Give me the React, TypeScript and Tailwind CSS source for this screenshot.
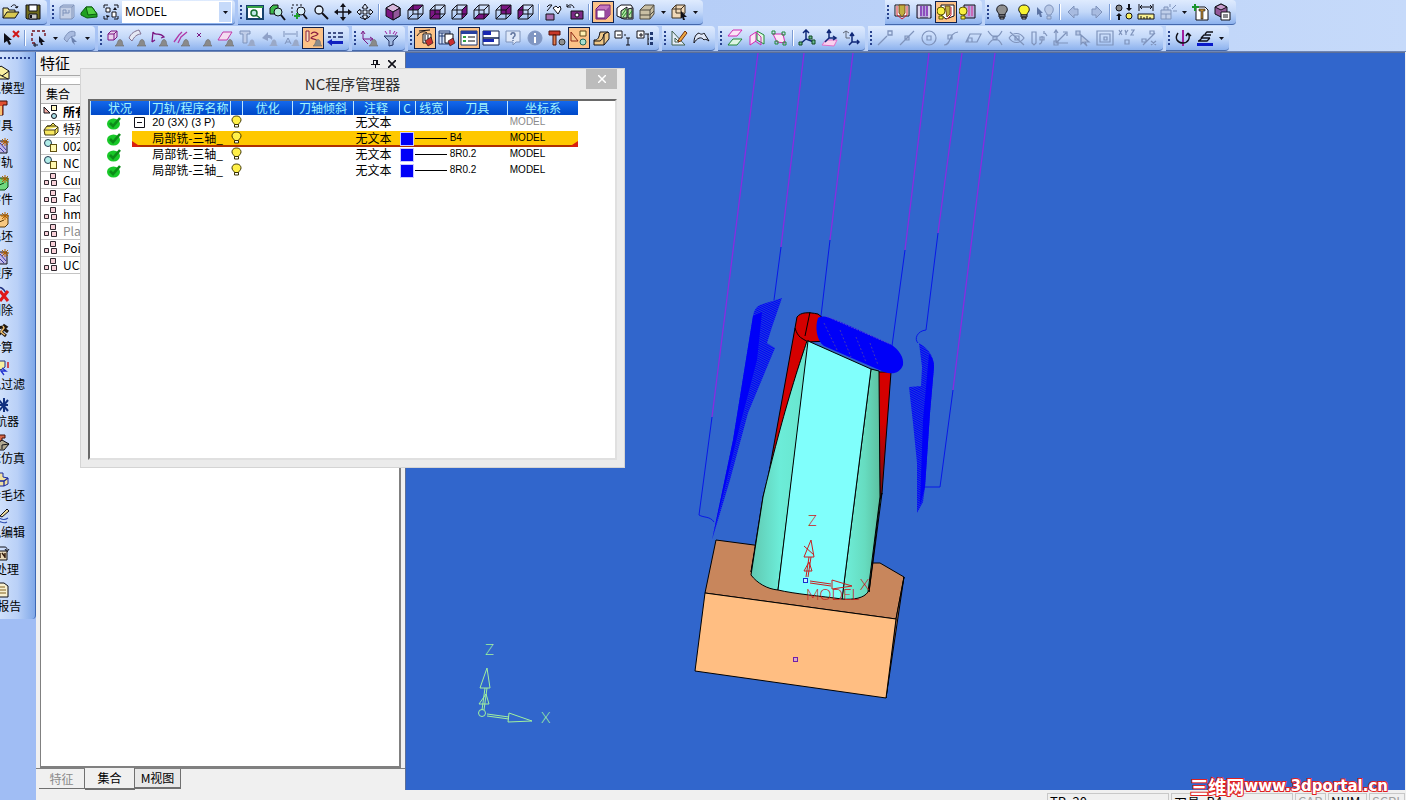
import { Fragment, useState } from "react";
import clsx from "clsx";

// [path, fill, stroke, stroke width]
type Shape = [string, string, string?, number?];

const K = "#101018";
const G = "#7f93bb";
const V = "#7a1582";
const N = "none";

const WIRE = "M2 7H12V16H2ZM2 7L7 2H17L12 7M17 2V11L12 16M7 2V11H17M7 11L2 16";
const BELL: Shape[] = [["M9 17C11 16 11 14 12 12C13 10 15 10 16 12C17 14 16 16 18 17Z", "#8a8a8a", "#6b6b6b", 0.6]];
const GRAYBELL: Shape[] = [["M9 17C11 16 11 14 12 12C13 10 15 10 16 12C17 14 16 16 18 17Z", "#9aa9c8"]];
const bulb = (fill: string, stroke: string, s = 1): Shape[] => [
  ["M9 2C5 2 3 5 4 8C5 10 6 10 6 12H12C12 10 13 10 14 8C15 5 13 2 9 2Z", fill, stroke, s],
  ["M6 12H12V14H6ZM7 14H11V16H7Z", stroke === K ? "#c8c8c8" : "#b8c8e8", stroke, s],
];
const cube = (face: string): Shape[] => [
  [face, V],
  [WIRE, N, K],
];

const icons: Record<string, Shape[]> = {
  open: [
    ["M1 15V5H6L7 7H13V9", "#f0e48c", K],
    ["M1 15L5 9H17L13 15Z", "#d8c850", K],
    ["M9 4C11 1 14 1 15 5M13 4L15 5L16 3", N, K],
  ],
  save: [
    ["M2 2H16V16H3L2 15Z", "#6f6a1c", K],
    ["M5 2H13V8H5Z", "#fff", K],
    ["M5 11H13V16H5Z", "#c8c8c8", K],
    ["M6 12H8V15H6Z", K],
  ],
  part: [
    ["M2 4L5 2H16V14L14 16H2Z", "#c3cfe6", G],
    ["M2 4H14V16M14 4L16 2M5 13V7H8V10H11V7M5 10H8", N, G],
  ],
  stock: [
    ["M1 10L6 4H12L17 11V14L7 15L1 12Z", "#20a020", "#0c5c10"],
    ["M6 4H12L17 11L8 12Z", "#50d040", "#0c5c10"],
  ],
  layers: [
    ["M2 5V2H6M12 2H16V5M16 13V16H12M6 16H2V13", N, K],
    ["M4 5H8V9H4ZM10 9H14V14H10Z", "#fff", K],
    ["M13 4L15 7L11 7ZM4 12L8 13L5 15Z", K],
  ],
  zoomWindow: [
    ["M1 3H17V16H1Z", "#fff", "#17406c", 2],
    ["M1 3H17V5H1Z", "#35a045"],
    ["M11 10A3 3 0 1 1 5 10A3 3 0 1 1 11 10M10 12L14 15", "#c0e8e8", "#187030", 1.5],
  ],
  zoomPart: [
    ["M2 5L5 2H10V8L7 11H2Z", "#3cb84a", K],
    ["M14 9A4 4 0 1 1 6 9A4 4 0 1 1 14 9", "#b8ecd8", K],
    ["M13 12L17 17", N, K, 2],
  ],
  zoomIn: [
    ["M2 2H4M6 2H8M10 2H12M2 4V6M2 8V10M2 12H3", N, K],
    ["M15 8A4 4 0 1 1 7 8A4 4 0 1 1 15 8", "#d8ecfa", K],
    ["M13 11L17 16", N, K, 2],
    ["M7 10V16M4 13H10", N, "#20a030", 2],
  ],
  zoom: [
    ["M11 7A4 4 0 1 1 3 7A4 4 0 1 1 11 7", "#e4f0fc", K, 1.3],
    ["M10 10L16 16", N, K, 2],
  ],
  pan: [
    ["M9 2V16M2 9H16", N, K, 1.4],
    ["M9 0L12 4H6ZM9 18L6 14H12ZM0 9L4 6V12ZM18 9L14 12V6Z", K],
  ],
  rotate: [
    ["M9 1L12 5H10V8H14V6L17 9L14 12V10H10V13H12L9 17L6 13H8V10H4V12L1 9L4 6V8H8V5H6Z", "#dce8fa", K],
    ["M4 14C7 17 12 16 14 13", N, K],
  ],
  iso: [
    ["M9 1L16 5V13L9 17L2 13V5Z", V, K],
    ["M9 1L16 5L9 9L2 5Z", "#d8b8dc", K],
    ["M9 9L16 5V13L9 17Z", "#93589a", K],
  ],
  top: cube("M2 7L7 2H17L12 7Z"),
  front: cube("M2 7H12V16H2Z"),
  right: cube("M12 7L17 2V11L12 16Z"),
  bottom: cube("M2 16L7 11H17L12 16Z"),
  back: cube("M7 2H17V11H7Z"),
  left: cube("M2 7L7 2V11L2 16Z"),
  prevView: [
    ["M2 11H10V17H2Z", "#a870b0", K],
    ["M3 8L8 2M3 4L5 2H8", N, K],
    ["M9 5L12 3L14 5L16 3L17 6L14 11Z", "#fff", K],
  ],
  camera: [
    ["M5 8H17V16H5Z", "#7c2a86", K],
    ["M13 12A2 2 0 1 1 9 12A2 2 0 1 1 13 12", "#fff", K],
    ["M1 4C3 1 7 1 8 5M1 4L1 1M1 4L5 4", N, K],
  ],
  shaded: [
    ["M2 6L6 2H16V12L12 16H2Z", "#c878c0", "#6a1870"],
    ["M3 7H11V15H3Z", "#fff", "#6a1870"],
    ["M12 7L16 3V12L12 16Z", "#9a4aa0"],
  ],
  section: [
    ["M1 5L5 2H15L17 5V16H8L1 13Z", "#fff", K],
    ["M5 8L11 4V15H5ZM12 6L16 5V15H12Z", "#b4e4a4", K],
    ["M6 12L10 6M7 14L11 9M13 12L16 8", N, "#208828"],
  ],
  transparent: [
    ["M2 7L7 2H16V11L12 16H2Z", "#c9bfa4", "#4e4a40"],
    ["M2 7H12V16M12 7L16 2M2 12H12L16 8", N, "#4e4a40"],
  ],
  pickCube: [
    ["M2 6L6 2H15V10L11 15H2Z", "#f0d8b8", "#3c3020"],
    ["M2 6H11V15M11 6L15 2M6 2V10M6 10H14", N, "#3c3020"],
    ["M11 8L17 14H14L15 17L13 17L12 14L11 16Z", K],
  ],
  toolA: [
    ["M2 2H16V13H2Z", "#fff", K],
    ["M6 2H12V10L9 14L6 10Z", "#c0b040", "#784818"],
    ["M4 3V12L9 16L14 12V3", N, "#d02030"],
  ],
  toolB: [
    ["M2 2H16V15H2Z", "#b8a8dc", K],
    ["M6 3V13M9 3V13M12 3V13", N, "#7c2ab0", 1.4],
    ["M4 3V15M14 3V15", N, "#fff"],
  ],
  toolC: [
    ["M4 2H17V13L9 16L4 12Z", "#fff", K],
    ["M8 3H13V11L10 14Z", "#c0b040", "#784818"],
    ["M14 4V12L10 16", N, "#d02030"],
    ["M8 8A4 4 0 1 1 0 8A4 4 0 1 1 8 8M2 13H6V16H2Z", "#f8ee40", "#605800"],
  ],
  toolD: [
    ["M5 2H16V15H5Z", "#b8a8dc", K],
    ["M10 3V13M13 3V13", N, "#d050a8", 1.4],
    ["M8 8A4 4 0 1 1 0 8A4 4 0 1 1 8 8M2 13H6V16H2Z", "#f8ee40", "#605800"],
  ],
  bulbOff: bulb("#909090", K),
  bulbOn: bulb("#f8f430", K),
  bulbPick: [
    ["M12 2C9 2 7 5 8 8C9 10 10 10 10 12H14C14 10 16 10 16 8C17 5 15 2 12 2ZM10 13H14V16H10Z", "#b8c8e6", G],
    ["M0 4L6 10H4L5 14L3 14L2 11L0 12Z", "#5d74a4"],
  ],
  prev: [["M3 9L9 3V6H13V12H9V15Z", "#a8bbe0", G]],
  next: [["M15 9L9 3V6H5V12H9V15Z", "#a8bbe0", G]],
  swap: [
    ["M7 5A3 3 0 1 1 1 5A3 3 0 1 1 7 5", "#888", K],
    ["M17 13A3 3 0 1 1 11 13A3 3 0 1 1 17 13", "#f8f060", K],
    ["M14 1V5M4 17V13", N, K, 2],
    ["M14 8L11 5H17ZM4 10L1 13H7Z", K],
  ],
  measure: [
    ["M2 1V8M16 1V8M3 4H15M5 2L3 4L5 6M13 2L15 4L13 6", N, K],
    ["M1 11H17V16H1Z", "#f8f090", K],
    ["M4 13V16M7 14V16M10 13V16M13 14V16", N, K],
  ],
  explode: [
    ["M2 7H12V16H2ZM2 11H12M5 7V4H9V7M7 11V16", "#c0cfea", G],
    ["M13 6L17 2M14 8H18M11 4V1", N, G],
  ],
  addTool: [
    ["M5 4H14L17 7V17H5Z", "#fff", K],
    ["M8 6H14V8H12V16H10V8H8Z", "#c08a30", K, 0.6],
    ["M4 1V8M1 4H8", N, "#18942c", 2],
  ],
  cubeProps: [
    ["M8 1L14 4V11L8 14L2 11V4Z", "#93589a", K],
    ["M8 1L14 4L8 7L2 4Z", "#c89ccc", K],
    ["M8 9H17V17H8Z", "#fff", K],
    ["M10 12H15M10 14H15", N, K],
  ],
  deselect: [
    ["M2 4L10 11H7L9 15L7 16L5 12L2 14Z", K],
    ["M11 2L17 8M17 2L11 8", N, "#d01818", 2],
  ],
  select: [
    ["M2 2H5M7 2H10M12 2H15M2 4V7M2 9V12M15 4V7M2 14H5", N, "#701018", 1.4],
    ["M9 7L15 13H12L13 16L11 16L10 13L9 14Z", K],
    ["M5 14V18M3 16H8", N, K],
  ],
  pickGray: [["M2 10C5 3 9 1 13 3V7C9 7 7 9 5 13Z", "#a8bbe0", G], ["M9 7L15 13H12L13 16L10 13Z", "#6b81ae"]],
  fCube: [["M2 5L5 2H11V8L8 11H2ZM2 5H8V11M8 5L11 2", "#e8d0ec", V], ...BELL],
  fFace: [["M1 9C3 4 7 2 11 1L13 5C9 5 6 8 4 12Z", "#e4e8f4", "#807090"], ...BELL],
  fCurve: [["M2 13L3 3C5 8 9 2 14 8L11 9M2 13L5 11", N, V, 1.3], ...BELL],
  fEdge: [["M2 13L7 6L10 3M6 14L9 8L15 3", N, "#b038a8", 1.3], ...BELL],
  fPoint: [["M3 4L7 8M7 4L3 8", N, V], ...BELL],
  fPlane: [["M2 11L7 3H16L11 11Z", "#f4dcf0", "#c038a8"], ...BELL],
  fTool: [["M2 2H12V5H9V14H5V5H2Z", "#c0cde8", G], ...GRAYBELL],
  fSweep: [["M2 9L8 3V6C12 6 13 8 12 11C10 9 9 9 8 9V12Z", "#8fa1c8"], ...GRAYBELL],
  fDim: [["M2 2V8M15 2V8M3 5H14M3 15L6 9L9 15M4 13H8", N, G], ...GRAYBELL],
  fPath: [
    ["M2 2V11C2 13 5 13 5 11V2Z", "#f8e0c0", "#8c2040"],
    ["M7 5C9 2 12 3 14 5C12 8 9 6 7 9C9 11 12 9 13 12", N, "#8c2040", 1.2],
    ...BELL,
  ],
  fList: [
    ["M2 4H5M7 4H10M12 4H17M2 8H5M7 8H10M12 8H17", N, "#102060", 1.6],
    ["M1 13L6 10V12H17V15H6V17Z", "#1020c0"],
  ],
  fAxis: [["M3 3V10M3 10H12M3 10L8 15M1 5L3 2L5 5M10 8L13 10L10 12", N, V], ...BELL],
  funnel: [
    ["M2 7H16L11 12V16L7 17V12Z", "#a0b8e0", "#203060"],
    ["M3 2L5 5M8 1V5M13 2L11 5M15 3L13 6", N, "#a020a0"],
  ],
  nav1: [["M1 7C4 2 8 2 11 4M3 2L14 1", N, K], ["M7 5H15V14H7Z", "#fff", K], ["M9 12L15 8L17 14L12 17Z", "#c83030", K, 0.6], ["M9 6V12M12 6V10", N, K]],
  nav2: [["M1 2H12V15H1Z", "#d8e4f8", "#203870"], ["M1 4H12M1 7H7M4 4V15", N, "#203870"], ["M7 5H15V14H7Z", "#fff", K], ["M10 12L15 9L17 14L12 17Z", "#c83030", K, 0.6]],
  listView: [["M1 2H17V16H1Z", "#fff", "#203870"], ["M1 2H17V5H1Z", "#2840a0"], ["M3 7H6V9H3ZM3 11H6V13H3Z", "#30a040"], ["M8 8H15M8 12H15", N, K]],
  panels: [["M1 2H17V9H1ZM1 9H17V16H1Z", "#fff", "#10204c"], ["M1 2H9V6H1ZM1 10H12V13H1Z", "#1828b0"]],
  help: [["M2 2H16V13H12L9 16V13H2Z", "#dfe8f8", G], ["M7 6C7 3 11 3 11 6C11 8 9 7 9 10M9 11V12", N, "#62769f", 1.5]],
  info: [["M16 9A7 7 0 1 1 2 9A7 7 0 1 1 16 9", "#8096c2", "#8096c2"], ["M9 8V14M9 4V6", N, "#fff", 2]],
  toolGear: [
    ["M1 2H12V6H1Z", "#c83828", "#501008"],
    ["M5 6H8V16H5Z", "#e08050", "#501008"],
    ["M17 13A3 3 0 1 1 11 13A3 3 0 1 1 17 13", "#909090", "#303030"],
  ],
  shapes: [["M1 3V12H8Z", "#f4c890", "#902818"], ["M10 2H16V7H10Z", "#fff0b0", "#604818"], ["M16 13A3 3 0 1 1 10 13A3 3 0 1 1 16 13", "#a8e0d0", "#206858"]],
  solid: [["M2 16V11C6 11 7 9 8 3H16L17 4V10L12 16Z", "#f0c888", K], ["M2 12H8C10 11 11 9 12 5L16 3M12 5V16", N, K]],
  collapse: [["M1 2H8V9H1Z", "#fff", K], ["M3 6H7M10 6H12M14 9V16M12 9H16M12 16H16", N, K]],
  expand: [["M1 2H8V9H1Z", "#fff", K], ["M3 6H7M5 4V8M9 5H12V16M12 5H13M12 10H13M12 15H13", N, K], ["M14 3H17V6H14ZM14 8H17V11H14ZM14 13H17V16H14Z", "#203870"]],
  sketch: [["M2 2V16H15Z", "#e4ecf8", "#406050"], ["M5 9V13H9Z", "#fff", "#406050"], ["M8 13L9 10L15 2L17 4L11 12Z", "#f0a840", "#703010"]],
  surface: [["M2 14C2 8 4 5 7 4C9 6 11 5 12 4L17 12C14 10 13 10 12 11C9 7 5 9 2 14Z", "#e0e8f8", K]],
  planes: [["M2 7L7 1H16L11 7Z", "#fbe4f6", "#d02ab0"], ["M2 16L7 10H16L11 16Z", "#e0f6e4", "#208838"]],
  planes2: [["M2 7L8 3V12L2 16Z", "#fbe4f6", "#d02ab0"], ["M9 2L16 6V15L9 11Z", "#e0f6e4", "#208838"], ["M8 3L13 8V16L7 12", N, "#d02ab0"]],
  planes3: [["M3 5L13 5L15 14L7 13Z", "#fbe4f6", "#d02ab0"], ["M2 2H5V5H2ZM12 3H15V6H12ZM13 13H16V16H13ZM5 12H8V15H5Z", N, "#208838"]],
  ucs: [["M8 1V10L2 15M8 10L16 13M5 4L8 1L11 4", N, "#102878", 1.5], ["M11 7H14V10H11ZM1 13H4V16H1ZM14 11H17V15H14Z", "#6ab890", "#104820"]],
  ucsPlane: [["M2 16L6 11H17L14 17Z", "#fbd0ee", "#e070c8"], ["M9 1V9H16M9 9L5 13M7 4L9 1L11 4M13 7L16 9L13 11", N, "#102878", 1.5]],
  ucsMove: [["M4 2V9M1 4L4 2L7 4M4 9H8", N, "#606878"], ["M10 4V13H17M8 7L10 4L12 7M15 11L17 13L15 15M10 13L7 16", N, "#102878", 1.5]],
  sEnd: [["M2 16L11 7M12 2H16V6H12Z", N, G, 1.3]],
  sMid: [["M2 16L16 2M7 7H11V11H7Z", "#b8c8e6", G, 1.2]],
  sCenter: [["M16 9A7 7 0 1 1 2 9A7 7 0 1 1 16 9M7 7H11V11H7Z", N, G, 1.2]],
  sTangent: [["M2 16C10 16 6 4 16 3M6 6H10V10H6Z", N, G, 1.2]],
  sPlane: [["M2 13L6 5H17L13 13ZM4 9H8V13H4Z", N, G, 1.2]],
  sCross: [["M2 2C7 10 12 10 16 2M2 16C7 8 12 8 16 16M7 7H11V11H7Z", N, G, 1.2]],
  sEye: [["M1 9C5 3 12 3 16 9C12 15 5 15 1 9M2 3L16 16M7 7H11V11H7Z", N, G, 1.2]],
  sCyl: [["M2 3H6V14L4 16L2 14ZM9 15C13 15 12 8 12 7M14 5V2M10 8H14V11H10ZM15 4L17 7", N, G, 1.2]],
  sAxes: [["M4 2V14H16M4 14L14 4M2 4L4 1L6 4M11 3H15V7M2 12H6V16H2Z", N, G, 1.2]],
  sPick: [["M2 2H6V6H2ZM7 6L15 13H11L13 17L9 13L7 15Z", "#b8c8e6", G, 1.2]],
  sFrame: [["M1 2H17V16H1ZM4 5H14V13H4ZM8 8H11V11H8Z", N, G, 1.2]],
  sXyz: [["M1 1L4 6M4 1L1 6M7 1L8 4L10 1M8 4V6M13 1H16L13 6H16M7 11H11V15H7Z", N, G, 1.2]],
  sPercent: [["M3 16L15 4M10 2H14V5H10ZM2 10H6V13H2ZM11 12L16 16M16 12L11 16", N, G, 1.2]],
  spin: [["M9 1V17", N, "#a020a0", 2], ["M4 4C0 10 4 14 9 14C14 14 17 9 14 4M14 4L12 7M14 4L17 7", N, K, 1.4]],
  layerStack: [["M1 14H17V17H1Z", "#0818c8"], ["M3 12L6 9H14M5 9L8 6H15M9 5L11 3H17M2 12H11L14 9", N, K, 1.3]],
};

const Icon = ({ shapes }: { shapes: Shape[] }) => (
  <svg width="18" height="18" viewBox="0 0 18 18" className="shrink-0" aria-hidden="true">
    {shapes.map(([d, fill, stroke, w], i) => (
      <path key={i} d={d} fill={fill} stroke={stroke ?? "none"} strokeWidth={w ?? 1} />
    ))}
  </svg>
);

// "|" is a separator, "v" a drop-down arrow, a leading "*" marks a pressed button
const ROW1 = {
  file: "open save",
  part: "part stock layers",
  view: "zoomWindow zoomPart zoomIn zoom pan rotate | iso top front right bottom back left | prevView camera | *shaded section transparent v pickCube v",
  tool: "toolA toolB *toolC toolD",
  show: "bulbOff bulbOn bulbPick | prev next | swap measure explode v addTool cubeProps",
};
const ROW2 = [
  "fCube fFace fCurve fEdge fPoint fPlane fTool fSweep fDim *fPath fList",
  "fAxis funnel",
  "*nav1 nav2 *listView panels help info toolGear *shapes solid collapse expand",
  "sketch surface",
  "planes planes2 planes3 | ucs ucsPlane ucsMove",
  "sEnd sMid sCenter sTangent sPlane sCross sEye sCyl sAxes sPick sFrame sXyz sPercent",
  "spin layerStack v",
];

const Tools = ({ spec }: { spec: string }) => (
  <>
    {spec.split(" ").map((t, i) => {
      if (t === "|")
        return (
          <span key={i} className="flex w-[6px] justify-center">
            <span className="h-4 w-px bg-[#7c9cd4]" />
            <span className="h-4 w-px bg-white" />
          </span>
        );
      if (t === "v")
        return (
          <button key={i} aria-label="More" className="flex w-[10px] justify-center">
            <svg width="5" height="3">
              <path d="M0 0H5L2.5 3Z" fill={K} />
            </svg>
          </button>
        );
      const on = t.startsWith("*");
      const name = on ? t.slice(1) : t;
      return (
        <button
          key={i}
          aria-label={name}
          className={clsx(
            "flex h-[22px] w-[22px] shrink-0 items-center justify-center",
            on && "border border-[#10204c] bg-[#fcc287]",
          )}
        >
          <Icon shapes={icons[name]} />
        </button>
      );
    })}
  </>
);

const Strip = ({ children, first = false, className = "" }: { children: React.ReactNode; first?: boolean; className?: string }) => (
  <div
    className={clsx(
      "flex h-[25px] shrink-0 items-center rounded-r border-b border-[#4468ac] bg-linear-to-b from-[#dfebfe] via-[#c3d8f9] to-[#8db2ee] pr-[3px]",
      className,
    )}
  >
    {!first && (
      <span className="flex w-[6px] justify-center">
        <span className="h-[15px] w-[2px] bg-[repeating-linear-gradient(180deg,#27418c_0_2px,transparent_2px_4px)]" />
      </span>
    )}
    {children}
  </div>
);

const Toolbars = () => (
  <div className="flex h-[52px] shrink-0 flex-col gap-px overflow-hidden border-b border-[#6f86b4] bg-linear-to-r from-[#a6c2f4] to-[#c6dafa]">
    <div className="flex gap-[3px]">
      <Strip first>
        <Tools spec={ROW1.file} />
      </Strip>
      <Strip>
        <Tools spec={ROW1.part} />
        <div className="relative flex h-[22px] w-[110px] items-center bg-white">
          <select
            aria-label="UCS"
            className="h-full w-full appearance-none pl-[3px] font-['Open_Sans',sans-serif] text-xs text-black outline-none"
          >
            <option>MODEL</option>
          </select>
          <span className="pointer-events-none absolute inset-y-px right-px flex w-[12px] items-center justify-center bg-[#c6dafa]">
            <svg width="5" height="3">
              <path d="M0 0H5L2.5 3Z" fill={K} />
            </svg>
          </span>
        </div>
      </Strip>
      <Strip>
        <Tools spec={ROW1.view} />
      </Strip>
      <Strip className="ml-[179px]">
        <Tools spec={ROW1.tool} />
      </Strip>
      <Strip>
        <Tools spec={ROW1.show} />
      </Strip>
    </div>
    <div className="flex gap-[3px]">
      <Strip first>
        <Tools spec="deselect | select v pickGray v" />
      </Strip>
      {ROW2.map((spec) => (
        <Strip key={spec}>
          <Tools spec={spec} />
        </Strip>
      ))}
    </div>
  </div>
);

const STAR: Shape = ["M13 1V9M9 5H17M10 2L16 8M16 2L10 8", N, "#b06000"];
const guide: { label: string; shapes: Shape[] }[] = [
  { label: "载入模型", shapes: [["M3 8L9 3L17 8V16H3Z", "#f8f0a0", K], ["M3 9L10 13L17 8M10 13L16 16", N, K]] },
  { label: "刀具", shapes: [["M3 1H15V5H11V15H7V5H3Z", "#e05030", "#401008"], ["M8 6H10V15H8Z", "#f8c070"]] },
  { label: "刀轨", shapes: [["M4 4H15V16H4Z", "#c0b8e8", K], ["M5 8L12 15M8 6L14 13", N, "#3838a0"], STAR] },
  { label: "零件", shapes: [["M4 7L8 4H16V13L13 16H4Z", "#70d880", "#084810"], ["M5 12L12 9", N, "#084810"], STAR] },
  { label: "毛坯", shapes: [["M4 7L8 4H16V13L13 16H4Z", "#f8c880", "#583808"], ["M5 12L12 9", N, "#583808"], STAR] },
  { label: "程序", shapes: [["M4 4H15V16H4Z", "#c0b8e8", K], ["M5 8L12 15M8 6L14 13", N, "#3838a0"], STAR] },
  { label: "删除", shapes: [["M3 4C8 0 12 4 14 8", N, "#203080", 1.5], ["M8 6L16 16M16 6L8 16", N, "#e01818", 3]] },
  { label: "计算", shapes: [["M11 3L14 5L12 7L16 10M12 7L9 10L14 14M9 10L4 16M11 5L5 6", N, "#201810", 3], ["M11 4L12 6L9 10L13 13", N, "#f0c070", 1.5]] },
  { label: "刀轨过滤", shapes: [["M5 2H13V8L9 11L5 8Z", "#f8f0a0", "#203080"], ["M10 9L14 12H9L12 16", N, "#2030d0", 1.3], ["M16 3V9", N, "#d02020", 1.5]] },
  { label: "导航器", shapes: [["M12 2V16M6 9H16M7 4L16 15M16 4L7 15", N, "#103080", 2]] },
  { label: "机床仿真", shapes: [["M4 2H13V5H10V8H6V5H4Z", "#d86848", "#401008"], ["M4 12L10 7L17 11L12 17H5Z", "#b0a890", K], ["M10 12L17 11M10 12V16", N, K]] },
  { label: "剩余毛坯", shapes: [["M3 6L7 3H11V7L16 8V14L12 16H3Z", "#f0e0a0", "#1828a0"], ["M3 11H12L16 8M12 11V16", N, "#1828a0", 1.3]] },
  { label: "刀轨编辑", shapes: [["M3 11C8 8 9 16 16 11M3 15C8 12 10 18 15 15", N, "#3050b0", 1.2], ["M8 9L15 2L17 4L10 10Z", "#f0e0a0", K]] },
  { label: "后处理", shapes: [["M3 3H12C15 3 15 4 15 7M13 5L15 8L17 5", N, K], ["M6 7H15V16H6Z", "#e8d8b8", K], ["M8 9V14M10 9L13 13M13 9V14", N, "#301808", 1.4]] },
  { label: "NC报告", shapes: [["M6 2H12L16 5V16H6Z", "#f8f0d0", K], ["M8 6H13M8 9H14M8 12H14", N, "#806020"]] },
];

const ProcessGuide = () => (
  <aside className="w-[36px] shrink-0 bg-[#a0bdf4]">
    <div className="overflow-hidden rounded-br border-r border-[#3d68b4] bg-linear-to-r from-[#cfe0fb] via-[#b9d0f7] to-[#80a8e8] pt-[5px] pb-px">
      <div className="mr-1 h-[2px] bg-[repeating-linear-gradient(90deg,#27418c_0_2px,transparent_2px_4px)]" />
      {/* the bar is docked half off the left edge */}
      <nav className="-ml-[34px] w-[70px] pt-1">
        {guide.map(({ label, shapes }) => (
          <button key={label} className="flex h-[37px] w-full flex-col items-center text-xs leading-[14px] whitespace-nowrap">
            <Icon shapes={shapes} />
            {label}
          </button>
        ))}
      </nav>
    </div>
  </aside>
);

const SETS = ["所有实体", "特殊集合", "002", "NC", "Curves", "Faces", "hmx", "Planes", "Points", "UCS"];

const SetIcon = ({ kind }: { kind: number }) => (
  <svg width="16" height="16" viewBox="0 0 16 16" className="shrink-0">
    {kind === 0 && (
      <>
        <path d="M1 3V9H7Z" fill="#f0a8a0" stroke={K} />
        <rect x="8.5" y="1.5" width="5" height="5" fill="#fff8c0" stroke={K} />
        <circle cx="11" cy="12" r="2.5" fill="#a8e0e8" stroke={K} />
      </>
    )}
    {kind === 1 && (
      <path d="M1 9L4 5H7L10 2L13 5L15 6V11L12 14H2ZM1 9H12L15 6M12 9V14M4 5H13" fill="#f8e860" stroke="#403810" />
    )}
    {(kind === 2 || kind === 3) && (
      <>
        <circle cx="5" cy="5" r="3.5" fill="#b0ece8" stroke="#203850" />
        <rect x="7.5" y="6.5" width="6" height="7" fill="#fff8b0" stroke="#605010" />
      </>
    )}
    {kind > 3 && (
      <path d="M7.5 1.5H12.5V6.5H7.5ZM1.5 8.5H5.5V12.5H1.5ZM8.5 8.5H13.5V13.5H8.5Z" fill="#f8d0d8" stroke="#302830" />
    )}
  </svg>
);

const FeaturePanel = () => {
  const [tab, setTab] = useState("集合");
  return (
    <section className="flex w-[369px] shrink-0 flex-col bg-[#f0f0f0]">
      <header className="flex h-[24px] items-center gap-2 border-b border-[#a8a8a8] pr-[9px] pl-1 text-[15px]">
        <h2 className="flex-1">特征</h2>
        <button aria-label="Pin">
          <svg width="9" height="10" viewBox="0 0 9 10">
            <path d="M2.5 1V5.5H6.5V1M2 1.5H7M0 5.5H9M4.5 6V10M5.5 1V5" fill="none" stroke={K} />
          </svg>
        </button>
        <button aria-label="Close">
          <svg width="8" height="8" viewBox="0 0 8 8">
            <path d="M0 0L8 8M8 0L0 8" stroke={K} strokeWidth="1.6" />
          </svg>
        </button>
      </header>
      <div className="mt-[2px] mr-1 ml-1 flex-1 border-r-2 border-b-2 border-l border-[#808080] bg-white pt-[6px]">
        <div className="h-[20px] border-y border-[#b0b0b0] bg-[#f0f0f0] pl-[5px] text-xs leading-[18px]">集合</div>
        {SETS.map((name, i) => (
          <div
            key={name}
            className={clsx(
              "flex h-[17px] items-center gap-1 border-b border-[#c4c4c4] pl-[2px] text-xs leading-[16px]",
              i === 0 && "font-bold",
              name === "Planes" && "text-[#8a8a8a]",
            )}
          >
            <SetIcon kind={i} />
            {name}
          </div>
        ))}
      </div>
      <div role="tablist" className="flex h-[32px] items-start border-t border-[#808080] pl-[3px] text-xs leading-[18px]">
        {["特征", "集合", "M视图"].map((t) => (
          <button
            key={t}
            role="tab"
            aria-selected={tab === t}
            onClick={() => setTab(t)}
            className={clsx(
              "border-r border-b border-[#707070]",
              tab === t ? "-mt-px h-[22px] w-[50px] border-b-2 bg-[#f0f0f0]" : "h-[20px] w-[46px]",
              t === "特征" && "text-[#8a8a8a]",
              t === "M视图" && "border-b-2 bg-[#e8e8e8]",
            )}
          >
            {t}
          </button>
        ))}
      </div>
    </section>
  );
};

const COLS = [42, 17, 81, 12, 50, 60, 46, 16, 32, 60, 71];
const HEAD = ["刀轨/程序名称", "", "优化", "刀轴倾斜", "注释", "C", "线宽", "刀具", "坐标系"];
const procs = [
  { name: "20 (3X) (3 P)", tool: "", folder: true },
  { name: "局部铣-三轴_", tool: "B4", current: true },
  { name: "局部铣-三轴_", tool: "8R0.2" },
  { name: "局部铣-三轴_", tool: "8R0.2" },
];

const Check = () => (
  <svg width="16" height="14" viewBox="0 0 16 14" className="ml-[16px]">
    <ellipse cx="7.5" cy="8" rx="6.5" ry="5.5" fill="#18c828" />
    <path d="M4 7L7 10L14 2" fill="none" stroke="#0c8c18" strokeWidth="2.6" />
  </svg>
);

const Bulb = () => (
  <svg width="11" height="14" viewBox="0 0 11 14" className="mx-auto">
    <path d="M5.5 1C2 1 1 3.500 1 5C1 7 3 8 3.500 9.500H7.500C8 8 10 7 10 5C10 3.500 9 1 5.500 1Z" fill="#fff048" stroke="#383000" />
    <path d="M3.500 9.500H7.500V12H3.500Z" fill="#fff" stroke="#383000" />
  </svg>
);

const ProcessManager = () => (
  <section
    role="dialog"
    aria-label="NC程序管理器"
    className="absolute top-[68px] left-[80px] z-10 flex h-[400px] w-[545px] flex-col border border-[#d4d4d4] bg-[#ebebeb] px-[7px] pb-[7px]"
  >
    <header className="relative flex h-[30px] shrink-0 items-center justify-center text-[15px] text-[#303030]">
      <h1>NC程序管理器</h1>
      <button aria-label="关闭" className="absolute top-0 right-0 flex h-[20px] w-[31px] items-center justify-center bg-[#bcbcbc]">
        <svg width="8" height="8" viewBox="0 0 8 8">
          <path d="M0 0L8 8M8 0L0 8" stroke="#fff" strokeWidth="1.5" />
        </svg>
      </button>
    </header>
    <div className="flex-1 border-2 border-t-[#696969] border-r-[#e0e0e0] border-b-[#e0e0e0] border-l-[#696969] bg-white">
      <table className="w-[488px] table-fixed border-separate border-spacing-0 text-xs leading-[14px] whitespace-nowrap text-black">
        <colgroup>
          {COLS.map((w, i) => (
            <col key={i} style={{ width: w }} />
          ))}
        </colgroup>
        <thead>
          <tr className="h-[14px] bg-linear-to-b from-[#1468ec] to-[#0048c8] text-[#a4f4fc]">
            <th colSpan={2} className="border-l border-[#c0e8ff] p-0 font-normal">
              状况
            </th>
            {HEAD.map((h, i) => (
              <th key={i} className="overflow-hidden border-l border-[#c0e8ff] p-0 font-normal">
                {h}
              </th>
            ))}
          </tr>
        </thead>
        <tbody>
          {procs.map((p, i) => {
            const bar = p.current && "bg-[#ffc800] shadow-[inset_0_-2px_0_#b03000]";
            const cell = clsx("p-0 pb-[2px]", bar);
            const arial = "font-['Liberation_Sans',sans-serif]";
            return (
              <tr key={i} className="h-[16px]">
                <td className="p-0">
                  <Check />
                </td>
                <td className={clsx("p-0", p.current && "align-bottom", bar)}>
                  {p.folder && (
                    <svg width="12" height="12" className="ml-[2px]">
                      <path d="M.5 .5H10.500V10.500H.5ZM3 5.500H8" fill="#fff" stroke={K} />
                    </svg>
                  )}
                  {p.current && (
                    <svg width="9" height="6">
                      <path d="M0 0L9 6H0Z" fill="#d82010" />
                    </svg>
                  )}
                </td>
                <td className={clsx(cell, "pl-[3px]", p.folder && arial, p.folder && "text-[11px]")}>{p.name}</td>
                <td className={cell}>
                  <Bulb />
                </td>
                <td className={cell} />
                <td className={cell} />
                <td className={clsx(cell, "pl-[3px]")}>无文本</td>
                <td className={clsx("p-0", bar)}>
                  {!p.folder && <span className="ml-px block h-[14px] w-[14px] border border-[#c8c8ff] bg-[#0000f8]" />}
                </td>
                <td className={cell}>{!p.folder && <span className="block h-px bg-black" />}</td>
                <td className={clsx(cell, arial, "pl-[3px] text-[10px]")}>{p.tool}</td>
                <td className={clsx(cell, arial, "relative pl-[3px] text-[10px]", p.folder && "text-[#8a8a8a]")}>
                  MODEL
                  {p.current && (
                    <svg width="9" height="6" className="absolute right-0 bottom-0">
                      <path d="M9 0V6H0Z" fill="#d82010" />
                    </svg>
                  )}
                </td>
              </tr>
            );
          })}
        </tbody>
      </table>
    </div>
  </section>
);

// rapid moves: magenta above the clearance height, blue below it
const rapids = [
  ["M758 53L712 417", "M712 417L699 515C704 518 710 516 714 522"],
  ["M804 53L781 247", "M781 247L774 300"],
  ["M853 53L830 240", "M830 240L821 316"],
  ["M929 53L905 250", "M905 250L892 346"],
  ["M962 53L938 233", "M938 233L926 330C917 331 914 339 918 343"],
  ["M995 53L953 390", "M953 390L940 487H925"],
];

const Viewport = () => (
  <div className="relative flex-1 overflow-hidden border-t border-l border-[#5c6f98] bg-[#3166cc]">
    <svg className="absolute inset-0 h-full w-full">
      <defs>
        <pattern id="hatch" width="2" height="2" patternUnits="userSpaceOnUse" patternTransform="rotate(28)">
          <rect width="2" height="1.4" fill="#0000f8" />
        </pattern>
        <linearGradient id="tealL">
          <stop offset="0" stopColor="#60c8b0" />
          <stop offset=".5" stopColor="#6cecd8" />
          <stop offset="1" stopColor="#68e4cc" />
        </linearGradient>
        <linearGradient id="tealR">
          <stop offset="0" stopColor="#70f0dc" />
          <stop offset=".6" stopColor="#66dcc0" />
          <stop offset="1" stopColor="#5cc0a0" />
        </linearGradient>
        <linearGradient id="red" x2="0" y2="1">
          <stop offset=".4" stopColor="#d40000" />
          <stop offset="1" stopColor="#701010" />
        </linearGradient>
      </defs>
      <g transform="translate(-406 -53)" fill="none">
        {rapids.map(([high, low]) => (
          <Fragment key={high}>
            <path d={high} stroke="#8a2be0" strokeWidth="1.3" />
            <path d={low} stroke="#0818e8" />
          </Fragment>
        ))}

        {/* base block */}
        <g stroke="#000" strokeLinejoin="round">
          <path d="M716 540L705 593L896 619L904 577L880 563L860 563L754 545Z" fill="#c8865c" />
          <path d="M896 619L904 577L886 698Z" fill="#a86c48" />
          <path d="M705 593L896 619L886 698L695 671Z" fill="#ffbe82" />
        </g>

        {/* boss */}
        <g stroke="#000" strokeLinejoin="round">
          <path d="M795 328L797 317C801 312 808 312 818 314L850 340L807 342C799 365 786 405 763 497L751 572Z" fill="url(#red)" />
          <path d="M795 328C798 338 802 338 808 342M810 312L805 336" />
          <path d="M878 372H891L882 493L880 500Z" fill="url(#red)" />
          <path d="M882 493L873 562L869 592L880 500Z" fill="#4c9c8c" />
          <path d="M807 341C799 365 783 412 763 497L751 575C757 583 767 589 778 590L809 341Z" fill="url(#tealL)" />
          <path d="M871 369L879 371L880 497L868 592C864 598 854 600 842 599Z" fill="url(#tealR)" />
          <path d="M808 341L871 369L842 599C820 596 795 594 778 590Z" fill="#80fffc" />
        </g>

        {/* cutting moves */}
        <path d="M782 298L760 305Q754 308 753 316L748 347L733 440L712 540L730 480L748 413L775 348L767 343L772 327Z" fill="url(#hatch)" />
        <path d="M753 316L762 312L757 360L740 425L712 540L733 440L748 347Z" fill="#0000f8" />
        <path d="M919 343Q934 352 934 367L930 413L925 487L923 502L917 513L917 463L913 423L909 387L921 386L922 367Z" fill="url(#hatch)" />
        <path d="M929 354Q934 358 934 367L930 413L925 487L920 505L923 420Z" fill="#0000f8" />
        <path d="M818 318C824 314 830 317 890 344C900 350 904 358 903 365C900 373 893 375 884 372L824 346C816 340 815 326 818 318Z" fill="#0000f8" />
        <path d="M824 323L838 352M840 330L851 357M856 337L866 362M870 343L878 365" stroke="#4038b8" strokeDasharray="2 2" />
        <path d="M826 316L890 344" stroke="#5048d8" strokeDasharray="2 1" />

        <rect x="793.5" y="657.5" width="4" height="4" fill="#d8a8c8" stroke="#7020a8" />

        {/* part UCS */}
        <g stroke="#c82020">
          <path d="M806 577L809 557M808 577L811 557M811 540L804 557H814ZM804 546L814 555M809 562L804 571H812ZM810 581L831 584M810 583L831 586M832 580V589L852 586Z" />
          <rect x="803.5" y="578.5" width="4" height="4" fill="#c8f4ff" stroke="#1830d0" />
        </g>
        <g fill="#c82020" className="font-['Lato',sans-serif] text-[15px] font-light">
          <text x="808" y="526">Z</text>
          <text x="860" y="590">X</text>
          <text x="806" y="600">MODEL</text>
        </g>

        {/* world axes */}
        <g stroke="#a0f0a0">
          <circle cx="482" cy="713" r="3.500" />
          <path d="M482 710L485 688M484 710L487 688M487 668L480 688H490ZM486 694L479 704H489ZM487 714L509 717M487 716L509 719M509 713L508 722L532 721Z" />
        </g>
        <g fill="#a0f0a0" className="font-['Lato',sans-serif] text-[15px] font-light">
          <text x="485" y="655">Z</text>
          <text x="541" y="723">X</text>
        </g>
      </g>
    </svg>
  </div>
);

const StatusBar = () => (
  <footer className="flex h-[10px] shrink-0 justify-end gap-[2px] overflow-hidden bg-[#f0f0f0] pt-[3px] text-[13px] leading-[16px]">
    <span className="h-[20px] w-[122px] shrink-0 border border-[#c8c8c8] pl-[2px]">TP: 20</span>
    <span className="h-[20px] w-[122px] shrink-0 border border-[#c8c8c8] pl-[2px]">刀具: B4</span>
    <span className="h-[20px] w-[31px] shrink-0 border border-[#c8c8c8] pl-[2px] text-[#a0a0a0]">CAP</span>
    <span className="h-[20px] w-[39px] shrink-0 border border-[#c8c8c8] pl-[2px]">NUM</span>
    <span className="h-[20px] w-[36px] shrink-0 border border-[#c8c8c8] pl-[2px] text-[#a0a0a0]">SCRL</span>
  </footer>
);

export default function App() {
  return (
    <div className="relative flex h-screen w-full flex-col overflow-hidden bg-[#f0f0f0] font-['Noto_Sans_CJK_SC',sans-serif] text-black">
      <Toolbars />
      <main className="flex min-h-0 flex-1">
        <ProcessGuide />
        <FeaturePanel />
        <div className="flex min-w-0 flex-1 flex-col pr-px">
          <Viewport />
          <StatusBar />
        </div>
      </main>
      <ProcessManager />
      <p className="absolute right-[18px] bottom-1 flex items-center font-['DejaVu_Sans',sans-serif] text-[15px] leading-[20px] font-bold text-white [paint-order:stroke_fill] [-webkit-text-stroke:2px_#e02020]">
        <span className="font-['Noto_Sans_CJK_SC',sans-serif] text-[18px]">三维网</span>
        www.3dportal.cn
      </p>
    </div>
  );
}
